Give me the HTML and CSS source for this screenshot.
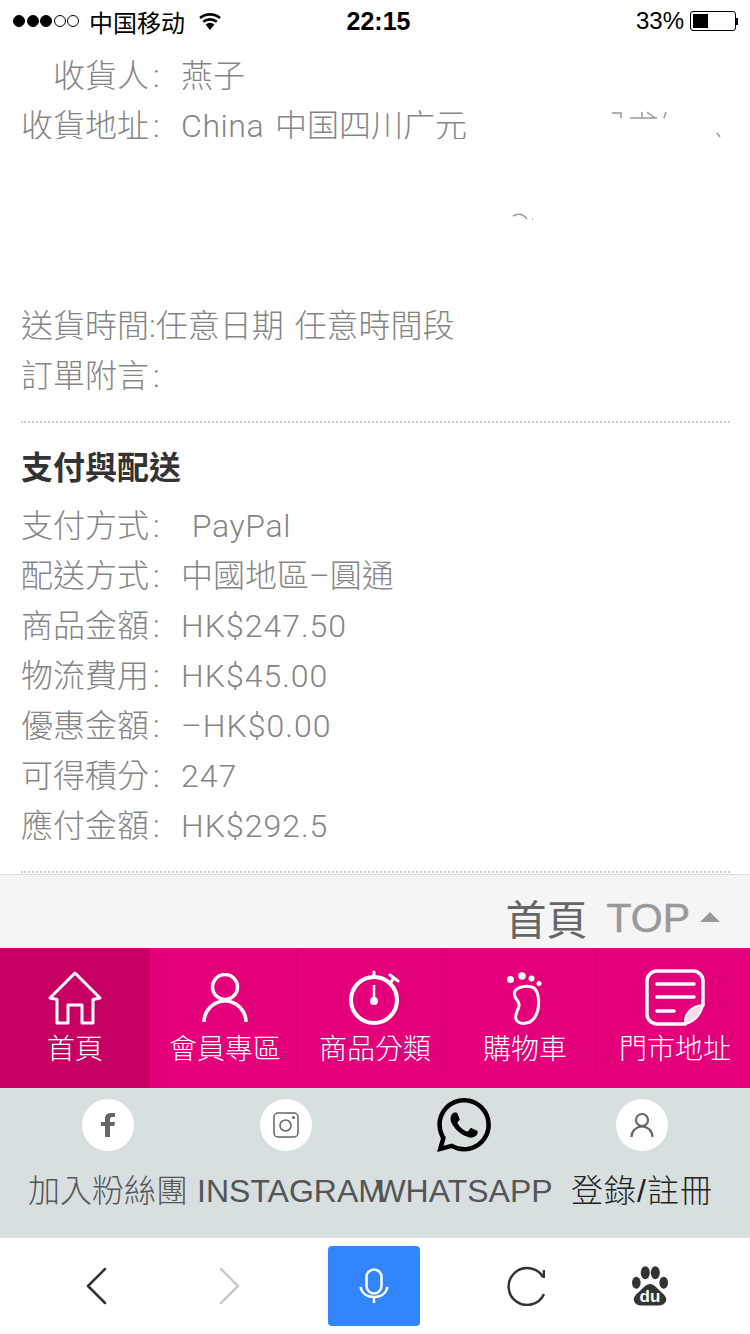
FILE: index.html
```html
<!DOCTYPE html>
<html lang="zh-Hant">
<head>
    <meta charset="UTF-8">
    <meta name="viewport" content="width=device-width, initial-scale=1.0">
    <title>訂單</title>
    <link rel="stylesheet" href="styles.css">
</head>
<body>
    <div class="status-bar">
        <div class="status-left">
            <div class="signal">
                <span class="dot on"></span><span class="dot on"></span><span class="dot on"></span><span class="dot"></span><span class="dot"></span>
            </div>
            <span class="carrier">中国移动</span>
            <svg class="wifi" viewBox="0 0 24 18" width="24" height="18">
                <path d="M12 18 7.6 12.6a7 7 0 0 1 8.8 0z" fill="#000"/>
                <path d="M5.2 9.8a10.6 10.6 0 0 1 13.6 0M2 6a15.6 15.6 0 0 1 20 0" fill="none" stroke="#000" stroke-width="2.6"/>
            </svg>
        </div>
        <div class="status-time">22:15</div>
        <div class="status-right">
            <span>33%</span>
            <div class="battery"><div class="battery-level"></div></div>
            <div class="battery-tip"></div>
        </div>
    </div>

    <div class="content">
        <div class="section">
            <div class="row"><span class="label">收貨人<span class="colon">:</span></span>燕子</div>
            <div class="address">
                <div class="row"><span class="label">收貨地址<span class="colon">:</span></span><span class="latin">China</span> 中国四川广元</div>
                <div class="redact"></div>
                <svg class="smudges" viewBox="0 0 230 120" width="230" height="120">
                    <path d="M101 3h9v5M119 8h27M131 2v6M136 2l8 6M155 2l-2 6M206 23l3 4M2 106c5-3 10-2 14 3M21 109h1" fill="none" stroke="#999" stroke-width="1.500"/>
                </svg>
            </div>
            <div class="row">送貨時間:任意日期 任意時間段</div>
            <div class="row">訂單附言<span class="colon">:</span></div>
        </div>

        <div class="section">
            <h2>支付與配送</h2>
            <div class="row">支付方式<span class="colon">:</span>&nbsp;<span class="latin">PayPal</span></div>
            <div class="row">配送方式<span class="colon">:</span>中國地區–圓通</div>
            <div class="row">商品金額<span class="colon">:</span><span class="num">HK$247.50</span></div>
            <div class="row">物流費用<span class="colon">:</span><span class="num">HK$45.00</span></div>
            <div class="row">優惠金額<span class="colon">:</span><span class="num">–HK$0.00</span></div>
            <div class="row">可得積分<span class="colon">:</span><span class="num">247</span></div>
            <div class="row">應付金額<span class="colon">:</span><span class="num">HK$292.5</span></div>
        </div>
    </div>

    <div class="top-bar">
        <a class="top-home">首頁</a>
        <a class="top-link">TOP</a>
        <span class="top-arrow"></span>
    </div>

    <div class="nav">
        <div class="nav-item active">
            <div class="nav-icon">
                <svg viewBox="0 0 54 54" width="54" height="54">
                    <path d="M27 2 52 27 45 28.500V52H34V34H20V52H9V28.500L2 27z" fill="none" stroke="#fff" stroke-width="3" stroke-linejoin="round"/>
                </svg>
            </div>
            <span>首頁</span>
        </div>
        <div class="nav-item">
            <div class="nav-icon">
                <svg viewBox="0 0 46 50" width="46" height="50">
                    <circle cx="23" cy="14" r="12.500" fill="none" stroke="#fff" stroke-width="3.500"/>
                    <path d="M2 49a21 21 0 0 1 42 0" fill="none" stroke="#fff" stroke-width="3.500"/>
                </svg>
            </div>
            <span>會員專區</span>
        </div>
        <div class="nav-item">
            <div class="nav-icon">
                <svg viewBox="0 0 56 56" width="56" height="56">
                    <circle cx="27" cy="30" r="23" fill="none" stroke="#fff" stroke-width="4"/>
                    <path d="M27 2V7M43 5l8 6M47 8l-3 4" fill="none" stroke="#fff" stroke-width="3" stroke-linecap="round"/>
                    <path d="M27 15V31" fill="none" stroke="#fff" stroke-width="2.500"/>
                    <circle cx="27" cy="31" r="4" fill="#fff"/>
                </svg>
            </div>
            <span>商品分類</span>
        </div>
        <div class="nav-item">
            <div class="nav-icon">
                <svg viewBox="0 0 36 54" width="36" height="54">
                    <circle cx="3.500" cy="8.500" r="3.500" fill="#fff"/>
                    <circle cx="15" cy="5" r="3.700" fill="#fff"/>
                    <circle cx="24.500" cy="7.500" r="3" fill="#fff"/>
                    <circle cx="32" cy="12.500" r="2.500" fill="#fff"/>
                    <path d="M8 20C12 15 22 14 27 17 33 22 33 38 28 46 24 53 12 55 9 48 7 42 13 38 12 33 11 28 5 26 8 20z" fill="none" stroke="#fff" stroke-width="3"/>
                </svg>
            </div>
            <span>購物車</span>
        </div>
        <div class="nav-item">
            <div class="nav-icon">
                <svg viewBox="0 0 60 58" width="60" height="58">
                    <path d="M40 55H12A10 10 0 0 1 2 45V12A10 10 0 0 1 12 2H48A10 10 0 0 1 58 12V36z" fill="none" stroke="#fff" stroke-width="3.500" stroke-linejoin="round"/>
                    <path d="M40 55C39 45 46 37 58 36 56 45 50 53 40 55z" fill="#fbd9ea" stroke="#fff" stroke-width="2"/>
                    <path d="M12 15H49M12 28H49M12 42H29" fill="none" stroke="#fff" stroke-width="3.500" stroke-linecap="round"/>
                </svg>
            </div>
            <span>門市地址</span>
        </div>
    </div>

    <div class="social">
        <div class="social-item">
            <div class="social-icon circle">
                <svg viewBox="0 0 16 26" width="16" height="26">
                    <path d="M5 25V14H1V10H5V7C5 3 7 1 11 1H15V5H12C10.500 5 10 5.700 10 7V10H15L14.300 14H10V25z" fill="#666"/>
                </svg>
            </div>
            <span>加入粉絲團</span>
        </div>
        <div class="social-item instagram">
            <div class="social-icon circle">
                <svg viewBox="0 0 26 26" width="26" height="26">
                    <rect x="1" y="1" width="24" height="24" rx="4" fill="none" stroke="#666" stroke-width="1.500"/>
                    <circle cx="12.500" cy="13.500" r="5.500" fill="none" stroke="#666" stroke-width="1.500"/>
                    <circle cx="20.500" cy="5.500" r="1.500" fill="#666"/>
                </svg>
            </div>
            <span>INSTAGRAM</span>
        </div>
        <div class="social-item">
            <div class="social-icon">
                <svg viewBox="0 0 24 24" width="54" height="54">
                    <path d="M17.472 14.382c-.297-.149-1.758-.867-2.03-.967-.273-.099-.471-.148-.67.15-.197.297-.767.966-.94 1.164-.173.199-.347.223-.644.075-.297-.15-1.255-.463-2.39-1.475-.883-.788-1.48-1.761-1.653-2.059-.173-.297-.018-.458.13-.606.134-.133.298-.347.446-.52.149-.174.198-.298.298-.497.099-.198.05-.371-.025-.52-.075-.149-.669-1.612-.916-2.207-.242-.579-.487-.5-.669-.51-.173-.008-.371-.01-.57-.01-.198 0-.52.074-.792.372-.272.297-1.04 1.016-1.04 2.479 0 1.462 1.065 2.875 1.213 3.074.149.198 2.096 3.2 5.077 4.487.709.306 1.262.489 1.694.625.712.227 1.36.195 1.871.118.571-.085 1.758-.719 2.006-1.413.248-.694.248-1.289.173-1.413-.074-.124-.272-.198-.57-.347m-5.421 7.403h-.004a9.87 9.87 0 01-5.031-1.378l-.361-.214-3.741.982.998-3.648-.235-.374a9.86 9.86 0 01-1.51-5.26c.001-5.45 4.436-9.884 9.888-9.884 2.64 0 5.122 1.03 6.988 2.898a9.825 9.825 0 012.893 6.994c-.003 5.45-4.437 9.884-9.885 9.884m8.413-18.297A11.815 11.815 0 0012.05 0C5.495 0 .16 5.335.157 11.892c0 2.096.547 4.142 1.588 5.945L.057 24l6.305-1.654a11.882 11.882 0 005.683 1.448h.005c6.554 0 11.89-5.335 11.893-11.893a11.821 11.821 0 00-3.48-8.413z" fill="#000"/>
                </svg>
            </div>
            <span>WHATSAPP</span>
        </div>
        <div class="social-item login">
            <div class="social-icon circle">
                <svg viewBox="0 0 24 26" width="24" height="26">
                    <circle cx="12" cy="8" r="6" fill="none" stroke="#666" stroke-width="2.200"/>
                    <path d="M1.500 25a10.500 10.500 0 0 1 21 0" fill="none" stroke="#666" stroke-width="2.200"/>
                </svg>
            </div>
            <span>登錄/註冊</span>
        </div>
    </div>

    <div class="browser-bar">
        <svg class="back" viewBox="0 0 22 38" width="22" height="38">
            <path d="M20 2 3 19 20 36" fill="none" stroke="#333" stroke-width="2.500" stroke-linecap="round" stroke-linejoin="round"/>
        </svg>
        <svg viewBox="0 0 22 38" width="22" height="38">
            <path d="M2 2 19 19 2 36" fill="none" stroke="#ccc" stroke-width="2.500" stroke-linecap="round" stroke-linejoin="round"/>
        </svg>
        <div class="voice-btn">
            <svg viewBox="0 0 30 36" width="30" height="36">
                <rect x="7.500" y="1.500" width="15" height="24" rx="7.500" fill="none" stroke="#fff" stroke-width="2.500"/>
                <path d="M1.500 19C3 26 9 29 15 29 21 29 27 26 28.500 19M15 29V35" fill="none" stroke="#fff" stroke-width="2.500"/>
            </svg>
        </div>
        <svg viewBox="0 0 38 40" width="38" height="40">
            <path d="M36 11A18.500 18.500 0 1 0 37 28M37 4V12" fill="none" stroke="#333" stroke-width="2.500"/>
        </svg>
        <svg viewBox="0 0 36 40" width="36" height="40">
            <ellipse cx="13.300" cy="6.700" rx="4.500" ry="6.500" fill="#333"/>
            <ellipse cx="23.300" cy="6.700" rx="4.500" ry="6.500" fill="#333"/>
            <ellipse cx="4.300" cy="16.700" rx="4.300" ry="6" fill="#333"/>
            <ellipse cx="31.700" cy="16.700" rx="4.300" ry="6" fill="#333"/>
            <path d="M18 18C14 18 11 22 8 25 3 29 1 32 2 35 3 38 6 39.500 10 39.500H26C30 39.500 33 38 34 35 35 32 33 29 28 25 25 22 22 18 18 18z" fill="#333"/>
            <text x="18" y="36" class="baidu-du">du</text>
        </svg>
    </div>
</body>
</html>
```

FILE: styles.css
```css
* {
    box-sizing: border-box;
}

body {
    margin: 0;
    width: 750px;
    height: 1334px;
    overflow: hidden;
    background: #fff;
    font-family: "Liberation Sans", "Noto Sans CJK TC", sans-serif;
}

.status-bar {
    height: 40px;
    padding: 2px 12px 0 13px;
    display: grid;
    grid-template-columns: 1fr auto 1fr;
    align-items: center;
    color: #000;
    font-size: 24px;
}

.status-left {
    display: flex;
    align-items: center;
}

.signal {
    display: flex;
    gap: 1.500px;
}

.dot {
    width: 12px;
    height: 12px;
    border: 1px solid #000;
    border-radius: 50%;
}

.dot.on {
    background: #000;
}

.carrier {
    margin-left: 10px;
}

.wifi {
    margin-left: 13px;
}

.status-time {
    margin-left: 6px;
    font-size: 25px;
    font-weight: bold;
}

.status-right {
    display: flex;
    align-items: center;
    justify-content: flex-end;
}

.battery {
    width: 46px;
    height: 20px;
    margin-left: 6px;
    padding: 2px;
    border: 1px solid #000;
    border-radius: 3px;
}

.battery-level {
    width: 15px;
    height: 100%;
    background: #000;
}

.battery-tip {
    width: 2px;
    height: 7px;
    background: #000;
}

.content {
    margin: 0 20px 0 21px;
    padding-top: 11px;
}

.section {
    padding-bottom: 20px;
    border-bottom: 2px dotted #ccc;
}

.row {
    height: 50px;
    line-height: 50px;
    font-family: Roboto, "Noto Sans CJK TC", sans-serif;
    font-size: 32px;
    font-weight: 300;
    color: #858585;
    word-spacing: 3px;
    white-space: nowrap;
}

.colon {
    display: inline-block;
    width: 32px;
    padding-left: 4px;
    text-align: left;
}

.num {
    letter-spacing: 1px;
}

.latin {
    letter-spacing: 0.600px;
}

.label {
    display: inline-block;
    width: 160px;
    text-align: right;
}

.address {
    position: relative;
    height: 200px;
}

.redact {
    position: absolute;
    left: 0;
    right: 0;
    top: 38px;
    height: 14px;
    background: #fff;
}

.smudges {
    position: absolute;
    left: 490px;
    top: 9px;
}

h2 {
    margin: 20px 0 8px;
    height: 50px;
    line-height: 50px;
    font-size: 32px;
    font-weight: bold;
    color: #333;
}

.top-bar {
    height: 74px;
    margin-top: 1px;
    padding: 10px 30px 0 0;
    display: flex;
    align-items: center;
    justify-content: flex-end;
    background: #f5f5f5;
    border-top: 1px solid #ddd;
}

.top-home {
    font-size: 41px;
    color: #666;
    margin-right: 19px;
}

.top-link {
    margin-top: 3px;
    font-size: 41px;
    color: #999;
    margin-right: 10px;
    -webkit-text-stroke: 0.500px #999;
}

.top-arrow {
    width: 0;
    height: 0;
    border-left: 10px solid transparent;
    border-right: 10px solid transparent;
    border-bottom: 10px solid #999;
}

.nav {
    height: 140px;
    display: flex;
    background: #e4007a;
    color: #fff;
    font-size: 28px;
    font-weight: 300;
}

.nav-item {
    position: relative;
    width: 150px;
    padding-top: 20px;
    display: flex;
    flex-direction: column;
    align-items: center;
}

.nav-item.active {
    background: #c50062;
}

.nav-item + .nav-item:not(:last-child)::after {
    content: "";
    position: absolute;
    right: 3px;
    top: 2px;
    bottom: 16px;
    width: 1px;
    background: #d6006f;
}

.nav-icon {
    height: 60px;
    display: flex;
    align-items: center;
    justify-content: center;
}

.nav-item span {
    line-height: 44px;
}

.social {
    height: 150px;
    padding: 10px 19px 0;
    display: flex;
    background: #d8dfe1;
}

.social-item {
    width: 178px;
    display: flex;
    flex-direction: column;
    align-items: center;
    color: #555;
    font-size: 32px;
    font-weight: 300;
    white-space: nowrap;
}

.social-item span {
    margin-top: 19px;
    line-height: 40px;
}

.social-item.instagram span {
    margin-left: 10px;
}

.social-item.login {
    color: #222;
    letter-spacing: 1px;
}

.social-icon {
    width: 54px;
    height: 54px;
    display: flex;
    align-items: center;
    justify-content: center;
}

.social-icon.circle {
    width: 52px;
    height: 52px;
    margin: 1px;
    background: #fff;
    border-radius: 50%;
}

.browser-bar {
    height: 96px;
    padding-left: 85px;
    display: flex;
    align-items: center;
    gap: 87px;
}

.back {
    margin-right: 25px;
}

.voice-btn {
    width: 92px;
    height: 80px;
    display: flex;
    align-items: center;
    justify-content: center;
    background: #3385ff;
    border-radius: 4px;
}

.baidu-du {
    fill: #fff;
    font-family: "Liberation Sans", sans-serif;
    font-size: 17px;
    font-weight: bold;
    text-anchor: middle;
}
```
